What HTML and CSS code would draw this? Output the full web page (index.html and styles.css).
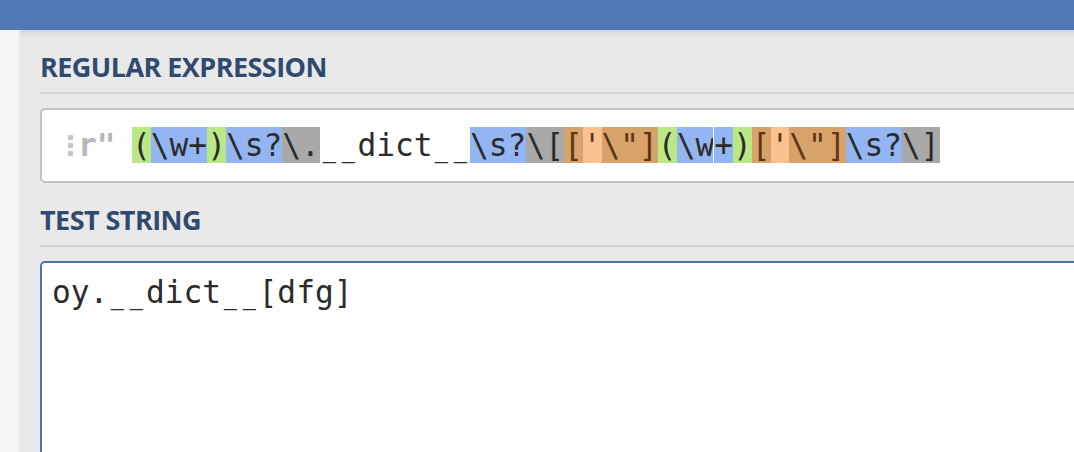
FILE: index.html
```html
<!DOCTYPE html>
<html lang="en">
<head>
    <meta charset="UTF-8">
    <title>Regular Expression</title>
    <link rel="stylesheet" href="styles.css">
</head>
<body>
    <div class="topbar"></div>
    <div class="layout">
        <div class="sidebar"></div>
        <div class="main">
            <h2 class="section-title">Regular Expression</h2>
            <div class="regex-box">
                <span class="handle"><i></i><i></i><i></i></span>
                <span class="delim">r"</span>
                <span class="regex"><span class="grp">(</span><span class="tok">\w+</span><span class="grp">)</span><span class="tok">\s?</span><span class="esc">\.</span><span class="us">_</span><span class="us">_</span>dict<span class="us">_</span><span class="us">_</span><span class="tok">\s?</span><span class="esc">\[</span><span class="cls">[</span><span class="cls-lit">'</span><span class="cls">\"]</span><span class="grp">(</span><span class="tok">\w</span><span class="tok split">+</span><span class="grp">)</span><span class="cls">[</span><span class="cls-lit">'</span><span class="cls">\"]</span><span class="tok">\s?</span><span class="esc">\]</span></span>
            </div>
            <h2 class="section-title second">Test String</h2>
            <div class="test-box">oy.<span class="us">_</span><span class="us">_</span>dict<span class="us">_</span><span class="us">_</span>[dfg]</div>
        </div>
    </div>
</body>
</html>
```

FILE: styles.css
```css
body {
    margin: 0;
    width: 1074px;
    height: 452px;
    overflow: hidden;
    font-family: 'Open Sans', sans-serif;
    background: #e9e9e9;
}
.topbar {
    height: 30px;
    background: #4e79b6;
}
.layout {
    display: flex;
    height: 422px;
}
.sidebar {
    width: 18px;
    background: #f6f6f6;
    border-right: 2px solid #efefef;
}
.main {
    flex: 1;
    background: #e9e9e9;
    padding: 22px 0 0 20px;
    overflow: hidden;
    box-shadow: inset 0 10px 10px -8px rgba(0, 0, 0, 0.12);
}
.section-title {
    width: 1100px;
    margin: 0;
    padding: 0 0 10px 0;
    font-size: 27px;
    line-height: 30px;
    font-weight: 700;
    letter-spacing: -0.55px;
    text-transform: uppercase;
    color: #2f4a6e;
    border-bottom: 2px solid #d5d5d5;
}
.section-title.second {
    margin-top: 22px;
}
.regex-box {
    width: 1100px;
    margin-top: 14px;
    padding: 18px 0 18px 26px;
    background: #fff;
    border: 2px solid #c2c2c2;
    border-radius: 5px;
    display: flex;
    align-items: center;
    font-family: 'DejaVu Sans Mono', monospace;
    font-size: 31.2px;
    line-height: 35px;
    color: #2b2b2b;
    white-space: pre;
}
.handle {
    display: flex;
    flex-direction: column;
    gap: 3px;
    width: 10px;
}
.handle i {
    display: block;
    width: 5px;
    height: 5px;
    border-radius: 1px;
    background: #c4c4c4;
}
.delim {
    width: 54px;
    color: #b8b8b8;
    font-weight: 700;
}
.us {
    display: inline-block;
    transform: scaleX(0.7);
}
.grp {
    background: #bbe886;
}
.tok {
    background: #93b6f3;
}
.tok.split {
    border-left: 1px solid #fff;
    margin-left: -1px;
}
.esc {
    background: #a9a9a9;
}
.cls {
    background: #d8a26b;
    color: #5e3411;
}
.cls-lit {
    background: #f9c290;
    color: #5e3411;
}
.test-box {
    width: 1100px;
    height: 300px;
    margin-top: 14px;
    padding: 12px 0 0 10px;
    background: #fff;
    border: 2px solid #4f71aa;
    border-radius: 5px;
    font-family: 'DejaVu Sans Mono', monospace;
    font-size: 31.2px;
    line-height: 35px;
    color: #2b2b2b;
    white-space: pre;
}
```
